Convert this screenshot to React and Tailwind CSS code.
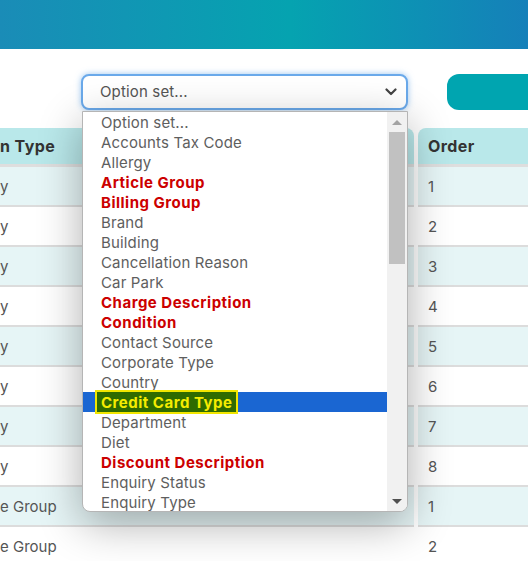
import React from "react";

const options = [
  { label: "Option set..." },
  { label: "Accounts Tax Code" },
  { label: "Allergy" },
  { label: "Article Group", bold: true },
  { label: "Billing Group", bold: true },
  { label: "Brand" },
  { label: "Building" },
  { label: "Cancellation Reason" },
  { label: "Car Park" },
  { label: "Charge Description", bold: true },
  { label: "Condition", bold: true },
  { label: "Contact Source" },
  { label: "Corporate Type" },
  { label: "Country" },
  { label: "Credit Card Type", bold: true, selected: true },
  { label: "Department" },
  { label: "Diet" },
  { label: "Discount Description", bold: true },
  { label: "Enquiry Status" },
  { label: "Enquiry Type" },
];

const rows = [
  { type: "y", order: "1" },
  { type: "y", order: "2" },
  { type: "y", order: "3" },
  { type: "y", order: "4" },
  { type: "y", order: "5" },
  { type: "y", order: "6" },
  { type: "y", order: "7" },
  { type: "y", order: "8" },
  { type: "e Group", order: "1" },
  { type: "e Group", order: "2" },
];

function OptionList() {
  return (
    <div className="absolute left-[82px] top-[111px] flex h-[401px] w-[326px] overflow-hidden rounded-b-lg border border-[#b5b5b5] bg-white shadow-[0_12px_44px_rgba(0,0,0,0.32)]">
      <ul className="flex-1">
        {options.map((o) => (
          <li
            key={o.label}
            className={
              "flex h-[20px] items-center whitespace-nowrap text-[15px] leading-none " +
              (o.selected ? "bg-[#1a66d2] pl-[12px]" : "pl-[18px]")
            }
          >
            {o.selected ? (
              <span className="flex h-[24px] items-center border-2 border-[#f2e600] bg-[#2f6b00] px-[4px] font-bold tracking-[0.5px] text-[#f5ec00]">
                {o.label}
              </span>
            ) : (
              <span className={o.bold ? "font-bold tracking-[0.5px] text-[#cc0000]" : "tracking-[0.15px] text-[#5e5e5e]"}>
                {o.label}
              </span>
            )}
          </li>
        ))}
      </ul>
      <div className="flex w-[20px] flex-col items-center bg-[#f1f1f1]">
        <div className="flex h-[20px] items-center">
          <div className="h-0 w-0 border-x-[5px] border-b-[5px] border-x-transparent border-b-[#a3a3a3]" />
        </div>
        <div className="h-[132px] w-[16px] bg-[#c1c1c1]" />
        <div className="flex-1" />
        <div className="flex h-[20px] items-center">
          <div className="h-0 w-0 border-x-[5px] border-t-[5px] border-x-transparent border-t-[#505050]" />
        </div>
      </div>
    </div>
  );
}

export default function App() {
  return (
    <div className="relative h-[561px] w-[528px] overflow-hidden bg-white font-['Inter','Liberation_Sans',sans-serif]">
      <div className="h-[49px] bg-[linear-gradient(90deg,#1a8cb7,#05a3b0_55%,#1580b9)]" />

      <div className="mt-[25px] flex h-[36px] items-center">
        <div className="ml-[81px] flex h-full w-[327px] items-center justify-between rounded-lg border-2 border-[#6aa9ea] bg-white pl-[17px] pr-[9px] shadow-[0_0_6px_rgba(90,160,230,0.6)]">
          <span className="text-[15px] tracking-[0.15px] text-[#555]">Option set...</span>
          <svg width="12" height="8" viewBox="0 0 12 8" fill="none">
            <path d="M1.5 1.5L6 6l4.5-4.5" stroke="#444" strokeWidth="2.2" strokeLinecap="round" strokeLinejoin="round" />
          </svg>
        </div>
        <div className="ml-[39px] h-full flex-1 rounded-l-xl bg-[#00a5b0]" />
      </div>

      <div className="mt-[18px] flex gap-[4px]">
        <div className="w-[414px]">
          <div className="flex h-[36px] items-center rounded-tr-lg bg-[#b9e8ea] text-[16px] font-bold tracking-[0.4px] text-[#333]">
            n Type
          </div>
          <div className="h-[3px] bg-[#dedede]" />
          {rows.map((r, i) => (
            <div
              key={"t" + i}
              className={
                "flex h-[40px] items-center border-b-2 border-[#dcdcdc] pt-[2px] text-[15px] text-[#555] " +
                (i % 2 === 0 ? "bg-[#e6f5f6]" : "bg-white")
              }
            >
              {r.type}
            </div>
          ))}
        </div>
        <div className="flex-1">
          <div className="flex h-[36px] items-center rounded-tl-lg bg-[#b9e8ea] pl-[10px] text-[16px] font-bold tracking-[0.4px] text-[#333]">
            Order
          </div>
          <div className="h-[3px] bg-[#dedede]" />
          {rows.map((r, i) => (
            <div
              key={"o" + i}
              className={
                "flex h-[40px] items-center border-b-2 border-[#dcdcdc] pl-[10px] pt-[2px] text-[15px] text-[#555] " +
                (i % 2 === 0 ? "bg-[#e6f5f6]" : "bg-white")
              }
            >
              {r.order}
            </div>
          ))}
        </div>
      </div>

      <OptionList />
    </div>
  );
}
